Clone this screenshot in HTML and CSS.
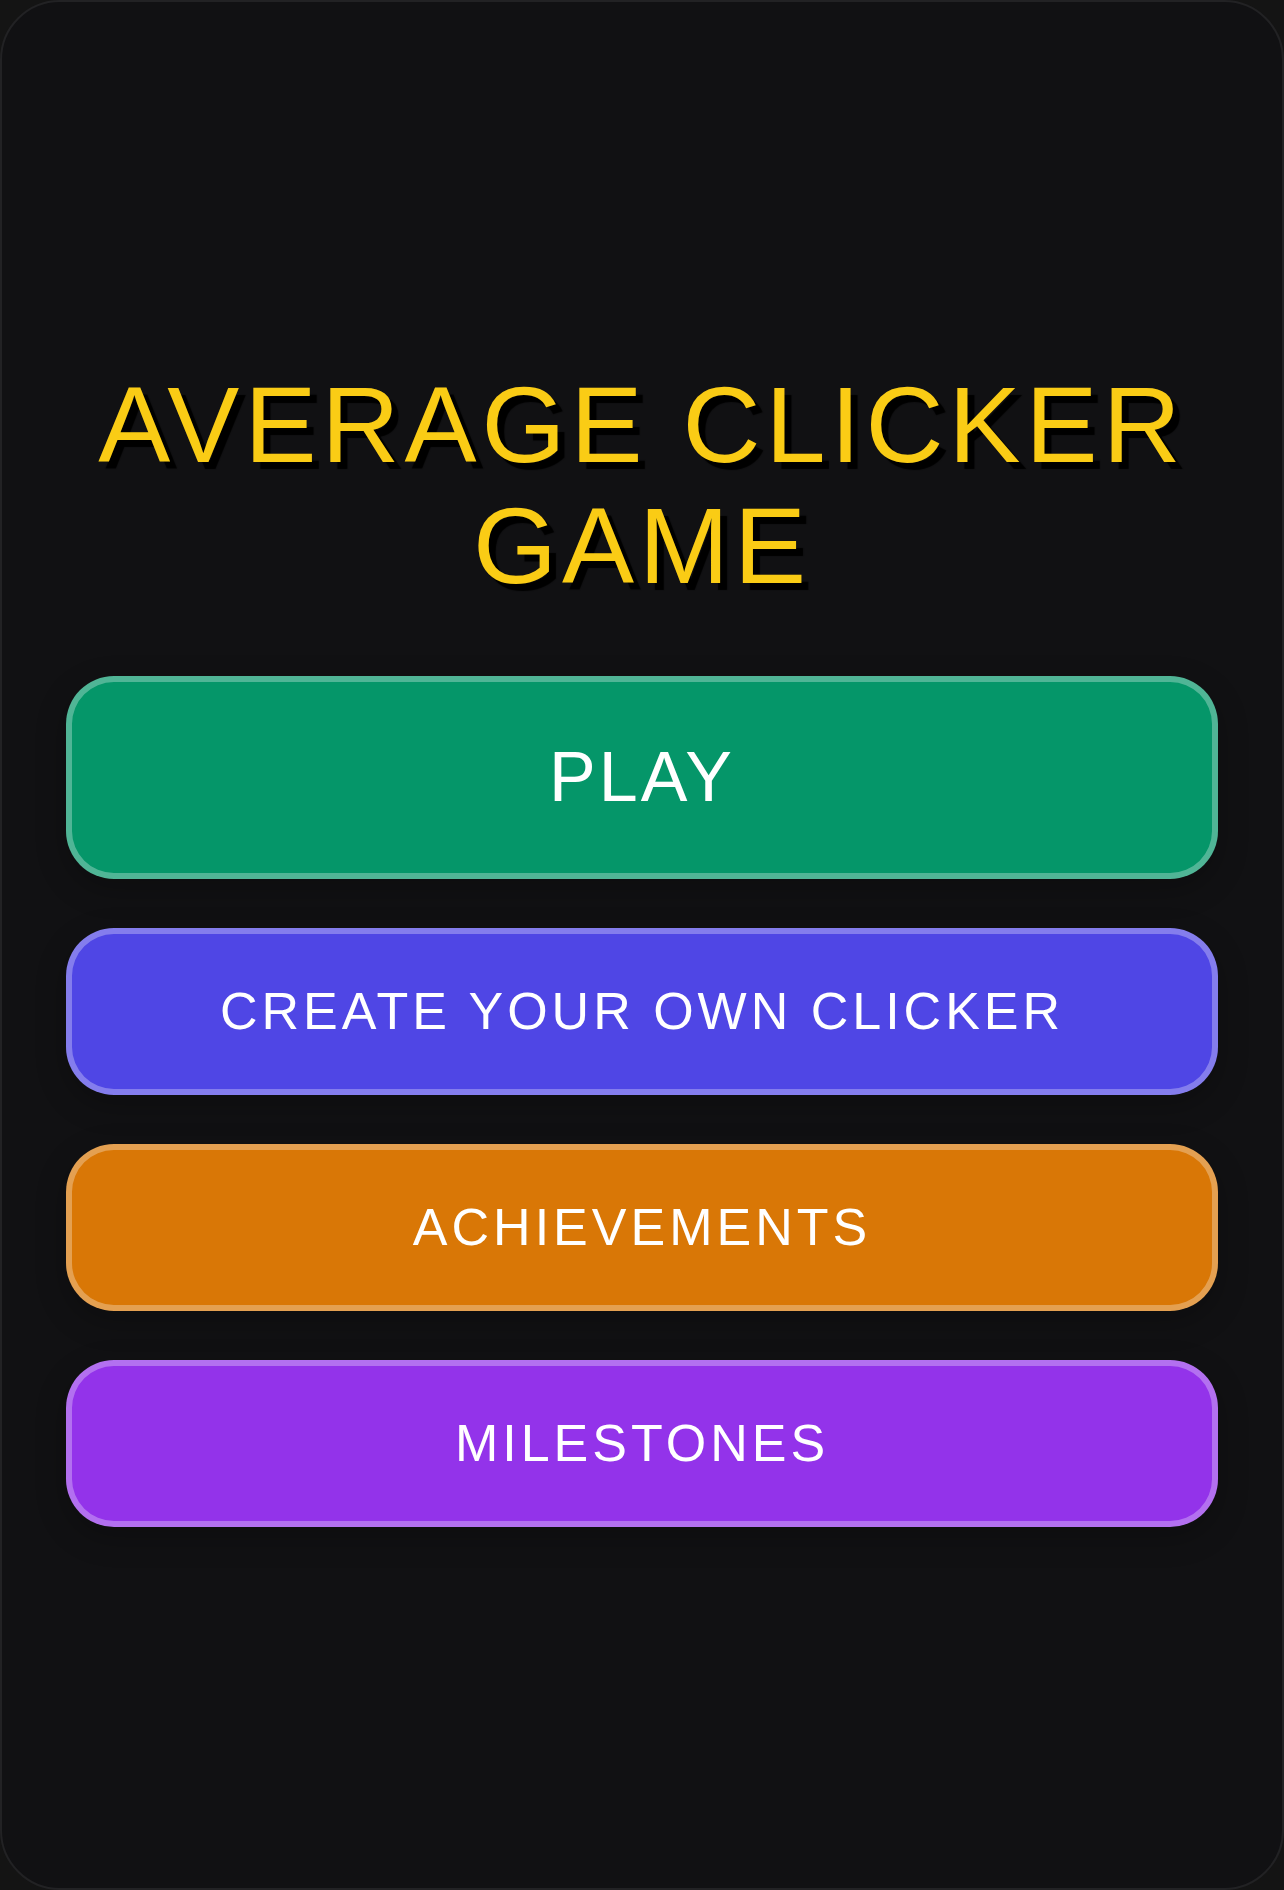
FILE: index.html
```html
<!DOCTYPE html>
<html lang="en">
<head>
  <meta charset="UTF-8">
  <title>Average Clicker Game</title>
  <link rel="stylesheet" href="styles.css">
</head>
<body>

  <div class="screen">
    <h1 class="title">Average Clicker Game</h1>

    <div class="menu">
      <button class="btn btn-play">Play</button>
      <button class="btn btn-create">Create Your Own Clicker</button>
      <button class="btn btn-achievements">Achievements</button>
      <button class="btn btn-milestones">Milestones</button>
    </div>
  </div>

</body>
</html>
```

FILE: styles.css
```css
* {
  box-sizing: border-box;
}
body {
  margin: 0;
  background-color: #141414;
  font-family: 'Liberation Sans', Arial, sans-serif;
}
.screen {
  width: 1284px;
  height: 1890px;
  background: #111113;
  border: 2px solid #222224;
  border-radius: 60px;
  padding: 0 64px;
  display: flex;
  flex-direction: column;
  justify-content: center;
}
.title {
  margin: 0 0 70px;
  font-size: 108px;
  line-height: 121px;
  font-weight: normal;
  letter-spacing: 5px;
  text-transform: uppercase;
  text-align: center;
  color: #facc15;
  text-shadow: 7px 7px 1px #000;
}
.menu {
  display: flex;
  flex-direction: column;
  gap: 49px;
}
.btn {
  width: 100%;
  font-family: inherit;
  color: #fff;
  text-transform: uppercase;
  border: 6px solid rgba(255,255,255,0.3);
  border-radius: 48px;
  line-height: 1;
  font-size: 52px;
  letter-spacing: 4px;
  padding: 51px 0 52px;
  cursor: pointer;
  box-shadow: 0 10px 30px rgba(0,0,0,0.25);
}
.btn-play {
  font-size: 70px;
  letter-spacing: 3px;
  padding: 60px 0 61px;
  background-color: #059669;
}
.btn-create {
  background-color: #4f46e5;
}
.btn-achievements {
  background-color: #d97706;
}
.btn-milestones {
  background-color: #9333ea;
}
```
